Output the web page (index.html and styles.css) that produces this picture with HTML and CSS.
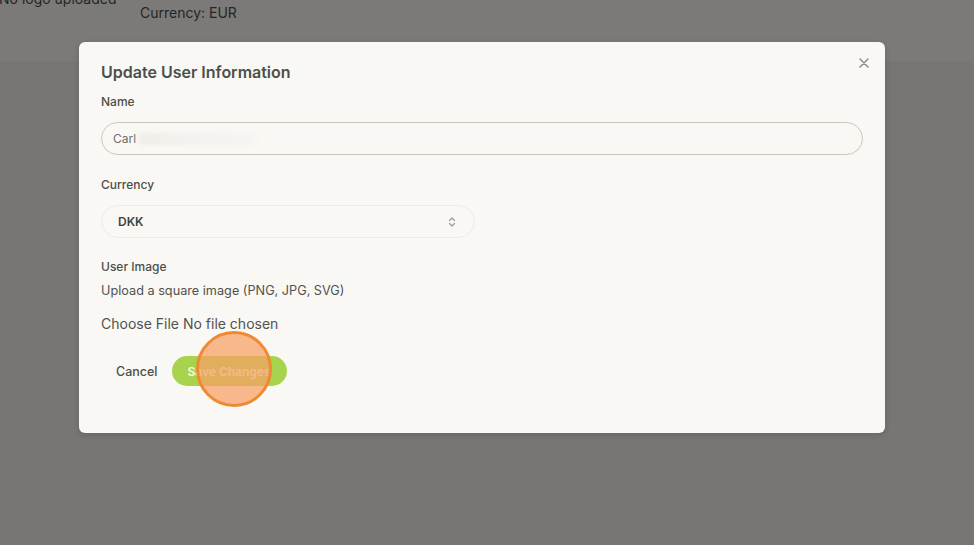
FILE: index.html
```html
<!DOCTYPE html>
<html>
<head>
<meta charset="utf-8">
<link rel="stylesheet" href="styles.css">
</head>
<body>
<div class="page">
  <div class="topband">
    <div class="logo-note">No logo uploaded</div>
    <div class="currency-note">Currency: EUR</div>
  </div>
</div>
<div class="overlay">
  <div class="modal">
    <button class="close" aria-label="Close">
      <svg width="10" height="10" viewBox="0 0 10 10"><path d="M1 1L9 9M9 1L1 9" stroke="#8a8a86" stroke-width="1.5" stroke-linecap="round"/></svg>
    </button>
    <h2 class="title">Update User Information</h2>
    <label class="label">Name</label>
    <div class="input"><span class="val">Carl </span><span class="blur"></span></div>
    <label class="label currency-label">Currency</label>
    <div class="select">
      <span>DKK</span>
      <svg width="10" height="12" viewBox="0 0 10 12"><path d="M2.5 4.5L5 2L7.5 4.5M2.5 7.5L5 10L7.5 7.5" fill="none" stroke="#9a9a96" stroke-width="1.2" stroke-linecap="round" stroke-linejoin="round"/></svg>
    </div>
    <label class="label image-label">User Image</label>
    <div class="hint">Upload a square image (PNG, JPG, SVG)</div>
    <div class="file">Choose File No file chosen</div>
    <div class="actions">
      <button class="cancel">Cancel</button>
      <button class="save">Save Changes</button>
    </div>
    <div class="click"></div>
  </div>
</div>
</body>
</html>
```
FILE: styles.css
```css
* { box-sizing: border-box; }
html, body { margin: 0; padding: 0; }
body {
  width: 974px;
  height: 545px;
  overflow: hidden;
  background: #777675;
  font-family: Inter, "Liberation Sans", sans-serif;
}
.page { height: 545px; }
.topband {
  height: 61px;
  background: #7b7a78;
  position: relative;
}
.logo-note {
  position: absolute;
  left: -1px;
  top: -10px;
  font-size: 14px;
  color: #262626;
}
.currency-note {
  position: absolute;
  left: 140px;
  top: 4px;
  font-size: 14px;
  color: #262626;
}
.overlay {
  position: absolute;
  left: 0; top: 0;
  width: 974px; height: 545px;
}
.modal {
  position: absolute;
  left: 79px;
  top: 42px;
  width: 806px;
  height: 391px;
  background: #faf8f4;
  border-radius: 6px;
  box-shadow: 0 2px 6px rgba(0,0,0,0.15);
  padding: 20px 22px 0 22px;
  display: flex;
  flex-direction: column;
  align-items: flex-start;
}
.close {
  position: absolute;
  right: 16px;
  top: 16px;
  border: 0;
  background: none;
  padding: 0;
  width: 10px; height: 10px;
  display: flex;
}
.title {
  margin: 0;
  font-size: 16px;
  font-weight: 600;
  color: #4b4f4b;
  line-height: 20px;
}
.label {
  font-size: 12px;
  font-weight: 500;
  color: #4b4f4b;
  line-height: 16px;
  margin-top: 12px;
}
.input {
  margin-top: 12px;
  width: 762px;
  height: 33px;
  border: 1.5px solid #c9c6c0;
  border-radius: 17px;
  display: flex;
  align-items: center;
  padding-left: 11px;
  font-size: 12px;
  color: #6d6e6b;
}
.blur {
  display: inline-block;
  width: 118px;
  height: 12px;
  margin-left: 2px;
  background: linear-gradient(90deg, #efeeeb, #f3f2ef 60%, #f6f5f2);
  filter: blur(2px);
}
.currency-label { margin-top: 22px; }
.select {
  margin-top: 12px;
  width: 374px;
  height: 33px;
  border: 1px solid #ecebe7;
  border-radius: 17px;
  display: flex;
  align-items: center;
  justify-content: space-between;
  padding: 0 17px 0 16px;
  font-size: 12px;
  font-weight: 600;
  color: #3e423e;
}
.image-label { margin-top: 21px; }
.hint {
  margin-top: 8px;
  font-size: 12.7px;
  color: #4f534f;
  line-height: 16px;
}
.file {
  margin-top: 16px;
  font-size: 14px;
  color: #505350;
  line-height: 18px;
}
.actions {
  margin-top: 23px;
  display: flex;
  align-items: center;
  gap: 14px;
  padding-left: 15px;
}
.cancel {
  border: 0;
  background: none;
  padding: 0;
  font-family: inherit;
  font-size: 12.5px;
  font-weight: 500;
  color: #4b4f4b;
}
.save {
  border: 0;
  background: #a8d44d;
  color: #f6fbe8;
  font-family: inherit;
  font-size: 12px;
  font-weight: 600;
  height: 30px;
  width: 115px;
  border-radius: 15px;
  padding: 0;
}
.click {
  position: absolute;
  left: 117px;
  top: 289px;
  width: 76px;
  height: 76px;
  border-radius: 50%;
  background: rgba(247, 160, 100, 0.72);
  border: 3px solid #ef8a33;
}
```
